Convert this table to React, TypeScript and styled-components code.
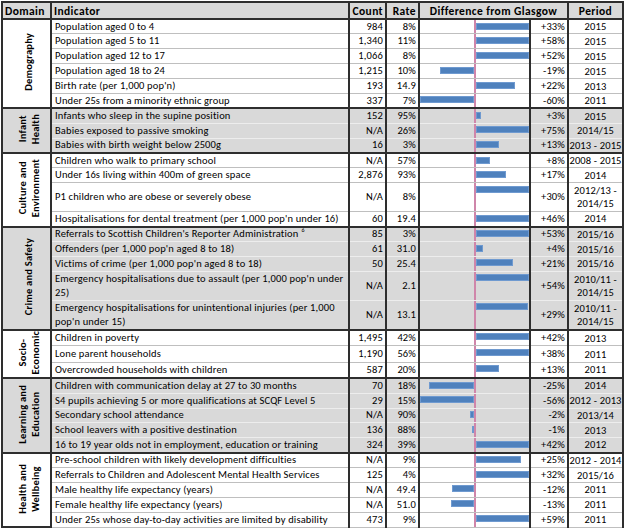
import React from 'react';
import styled, { createGlobalStyle } from 'styled-components';

const Global = createGlobalStyle`
  html, body { margin: 0; padding: 0; background: #ffffff; }
  body { font-family: Carlito, Lato, "Liberation Sans", sans-serif; color: #000; }
`;

type Row = {
  ind: React.ReactNode;
  count: string;
  rate: string;
  diff: number;
  period: React.ReactNode;
  tall?: boolean;
};
type Domain = { label: React.ReactNode; shade: boolean; rows: Row[] };

const GRAY = '#d9d9d9';
const DARK = '#2e2e2e';
const THIN = '#bfbfbf';
const THIN_ON_GRAY = '#ededed';
const PINK = '#cf86aa';

const Table = styled.table`
  border-collapse: collapse;
  table-layout: fixed;
  width: 621px;
  margin: 1px 0 0 1px;
  font-size: 10.5px;
  font-weight: 500;
  letter-spacing: 0.15px;
  line-height: 12px;
`;

const HeadRow = styled.tr`
  height: 17px;
  background: ${GRAY};
`;

const HeadCell = styled.th<{ $align?: string }>`
  border: 2px solid ${DARK};
  font-size: 11.5px;
  font-weight: 700;
  letter-spacing: 0.4px;
  text-align: ${(p) => p.$align || 'left'};
  padding: 0 2px 0 2px;
  white-space: nowrap;
  vertical-align: middle;
`;

const BodyRow = styled.tr<{ $shade: boolean; $tall?: boolean; $first: boolean }>`
  height: ${(p) => (p.$tall ? '29px' : '14.9px')};
  background: ${(p) => (p.$shade ? GRAY : '#ffffff')};
  & > td {
    border-top: ${(p) =>
      p.$first ? `2px solid ${DARK}` : `1px solid ${p.$shade ? THIN_ON_GRAY : THIN}`};
  }
`;

const DomainCell = styled.td<{ $shade: boolean }>`
  border: 2px solid ${DARK};
  background: ${(p) => (p.$shade ? GRAY : '#ffffff')};
  text-align: center;
  vertical-align: middle;
  padding: 0 0 0 6px;
`;

const DomainLabel = styled.div`
  display: inline-block;
  writing-mode: vertical-rl;
  transform: rotate(180deg);
  font-size: 10.5px;
  font-weight: 700;
  letter-spacing: 0.2px;
  white-space: nowrap;
  line-height: 12.5px;
  text-align: center;
`;

const Cell = styled.td<{ $shade?: boolean }>`
  border-left: 2px solid ${DARK};
  border-right: 2px solid ${DARK};
  border-bottom: 1px solid ${(p) => (p.$shade ? THIN_ON_GRAY : THIN)};
  vertical-align: middle;
  white-space: nowrap;
  overflow: hidden;
  padding: 0;
`;

const IndCell = styled(Cell)<{ $tall?: boolean }>`
  text-align: left;
  padding: 0 2px 0 3px;
  line-height: ${(p) => (p.$tall ? '14px' : '12px')};
`;

const NumCell = styled(Cell)`
  text-align: right;
  padding: 0 2px 0 0;
`;

const PeriodCell = styled(Cell)`
  text-align: center;
  line-height: 13px;
`;

const BarCell = styled(Cell)`
  vertical-align: top;
  background: linear-gradient(
      to right,
      transparent 54px,
      ${PINK} 54px,
      ${PINK} 55.5px,
      transparent 55.5px
    ),
    ${(p) => (p.$shade ? GRAY : '#ffffff')};
`;

const Track = styled.div`
  display: grid;
  grid-template-columns: 54px 56px;
  padding-top: 2.5px;
`;

const Side = styled.div<{ $neg?: boolean }>`
  display: flex;
  justify-content: ${(p) => (p.$neg ? 'flex-end' : 'flex-start')};
  padding: ${(p) => (p.$neg ? '0 0 0 0' : '0 0 0 1.5px')};
`;

const Bar = styled.div`
  height: 7px;
  background: #4f81bd;
  box-shadow: inset 0 0 0 1px #6f9ad0;
`;

const Sup = styled.sup`
  font-size: 6px;
  line-height: 0;
  vertical-align: 5px;
  margin-left: 3px;
`;

const twoLine = (a: string, b: string) => (
  <>
    {a}
    <br />
    {b}
  </>
);

const domains: Domain[] = [
  {
    label: 'Demography',
    shade: false,
    rows: [
      { ind: 'Population aged 0 to 4', count: '984', rate: '8%', diff: 33, period: '2015' },
      { ind: 'Population aged 5 to 11', count: '1,340', rate: '11%', diff: 58, period: '2015' },
      { ind: 'Population aged 12 to 17', count: '1,066', rate: '8%', diff: 52, period: '2015' },
      { ind: 'Population aged 18 to 24', count: '1,215', rate: '10%', diff: -19, period: '2015' },
      { ind: "Birth rate (per 1,000 pop'n)", count: '193', rate: '14.9', diff: 22, period: '2013' },
      { ind: 'Under 25s from a minority ethnic group', count: '337', rate: '7%', diff: -60, period: '2011' },
    ],
  },
  {
    label: twoLine('Infant', 'Health'),
    shade: true,
    rows: [
      { ind: 'Infants who sleep in the supine position', count: '152', rate: '95%', diff: 3, period: '2015' },
      { ind: 'Babies exposed to passive smoking', count: 'N/A', rate: '26%', diff: 75, period: '2014/15' },
      { ind: 'Babies with birth weight below 2500g', count: '16', rate: '3%', diff: 13, period: '2013 - 2015' },
    ],
  },
  {
    label: twoLine('Culture and', 'Environment'),
    shade: false,
    rows: [
      { ind: 'Children who walk to primary school', count: 'N/A', rate: '57%', diff: 8, period: '2008 - 2015' },
      { ind: 'Under 16s living within 400m of green space', count: '2,876', rate: '93%', diff: 17, period: '2014' },
      {
        ind: 'P1 children who are obese or severely obese',
        count: 'N/A',
        rate: '8%',
        diff: 30,
        period: twoLine('2012/13 -', '2014/15'),
        tall: true,
      },
      {
        ind: "Hospitalisations for dental treatment (per 1,000 pop'n under 16)",
        count: '60',
        rate: '19.4',
        diff: 46,
        period: '2014',
      },
    ],
  },
  {
    label: 'Crime and Safety',
    shade: true,
    rows: [
      {
        ind: (
          <>
            Referrals to Scottish Children's Reporter Administration<Sup>6</Sup>
          </>
        ),
        count: '85',
        rate: '3%',
        diff: 53,
        period: '2015/16',
      },
      { ind: "Offenders (per 1,000 pop'n aged 8 to 18)", count: '61', rate: '31.0', diff: 4, period: '2015/16' },
      { ind: "Victims of crime (per 1,000 pop'n aged 8 to 18)", count: '50', rate: '25.4', diff: 21, period: '2015/16' },
      {
        ind: twoLine("Emergency hospitalisations due to assault (per 1,000 pop'n under", '25)'),
        count: 'N/A',
        rate: '2.1',
        diff: 54,
        period: twoLine('2010/11 -', '2014/15'),
        tall: true,
      },
      {
        ind: twoLine('Emergency hospitalisations for unintentional injuries (per 1,000', "pop'n under 15)"),
        count: 'N/A',
        rate: '13.1',
        diff: 29,
        period: twoLine('2010/11 -', '2014/15'),
        tall: true,
      },
    ],
  },
  {
    label: twoLine('Socio-', 'Economic'),
    shade: false,
    rows: [
      { ind: 'Children in poverty', count: '1,495', rate: '42%', diff: 42, period: '2013' },
      { ind: 'Lone parent households', count: '1,190', rate: '56%', diff: 38, period: '2011' },
      { ind: 'Overcrowded households with children', count: '587', rate: '20%', diff: 13, period: '2011' },
    ],
  },
  {
    label: twoLine('Learning and', 'Education'),
    shade: true,
    rows: [
      { ind: 'Children with communication delay at 27 to 30 months', count: '70', rate: '18%', diff: -25, period: '2014' },
      {
        ind: 'S4 pupils achieving 5 or more qualifications at SCQF Level 5',
        count: '29',
        rate: '15%',
        diff: -56,
        period: '2012 - 2013',
      },
      { ind: 'Secondary school attendance', count: 'N/A', rate: '90%', diff: -2, period: '2013/14' },
      { ind: 'School leavers with a positive destination', count: '136', rate: '88%', diff: -1, period: '2013' },
      {
        ind: '16 to 19 year olds not in employment, education or training',
        count: '324',
        rate: '39%',
        diff: 42,
        period: '2012',
      },
    ],
  },
  {
    label: twoLine('Health and', 'Wellbeing'),
    shade: false,
    rows: [
      {
        ind: 'Pre-school children with likely development difficulties',
        count: 'N/A',
        rate: '9%',
        diff: 25,
        period: '2012 - 2014',
      },
      {
        ind: 'Referrals to Children and Adolescent Mental Health Services',
        count: '125',
        rate: '4%',
        diff: 32,
        period: '2015/16',
      },
      { ind: 'Male healthy life expectancy (years)', count: 'N/A', rate: '49.4', diff: -12, period: '2011' },
      { ind: 'Female healthy life expectancy (years)', count: 'N/A', rate: '51.0', diff: -13, period: '2011' },
      {
        ind: 'Under 25s whose day-to-day activities are limited by disability',
        count: '473',
        rate: '9%',
        diff: 59,
        period: '2011',
      },
    ],
  },
];

const SCALE = 1.8;

function DiffBar({ diff }: { diff: number }) {
  const neg = diff < 0;
  const w = Math.min(Math.abs(diff) * SCALE, neg ? 54 : 53);
  return (
    <Track>
      <Side $neg>{neg && <Bar style={{ width: `${w}px` }} />}</Side>
      <Side>{!neg && <Bar style={{ width: `${w}px` }} />}</Side>
    </Track>
  );
}

const fmt = (d: number) => (d > 0 ? `+${d}%` : `${d}%`);

export default function App() {
  return (
    <>
      <Global />
      <Table>
        <colgroup>
          <col style={{ width: 49 }} />
          <col style={{ width: 298 }} />
          <col style={{ width: 37 }} />
          <col style={{ width: 33 }} />
          <col style={{ width: 111 }} />
          <col style={{ width: 38 }} />
          <col style={{ width: 55 }} />
        </colgroup>
        <thead>
          <HeadRow>
            <HeadCell>Domain</HeadCell>
            <HeadCell>Indicator</HeadCell>
            <HeadCell $align="right">Count</HeadCell>
            <HeadCell $align="right">Rate</HeadCell>
            <HeadCell $align="center" colSpan={2}>
              Difference from Glasgow
            </HeadCell>
            <HeadCell $align="center">Period</HeadCell>
          </HeadRow>
        </thead>
        <tbody>
          {domains.map((dom, di) =>
            dom.rows.map((r, ri) => (
              <BodyRow key={`${di}-${ri}`} $shade={dom.shade} $tall={r.tall} $first={ri === 0}>
                {ri === 0 && (
                  <DomainCell rowSpan={dom.rows.length} $shade={dom.shade}>
                    <DomainLabel>{dom.label}</DomainLabel>
                  </DomainCell>
                )}
                <IndCell $tall={r.tall} $shade={dom.shade}>
                  {r.ind}
                </IndCell>
                <NumCell $shade={dom.shade}>{r.count}</NumCell>
                <NumCell $shade={dom.shade}>{r.rate}</NumCell>
                <BarCell $shade={dom.shade}>
                  <DiffBar diff={r.diff} />
                </BarCell>
                <NumCell $shade={dom.shade}>{fmt(r.diff)}</NumCell>
                <PeriodCell $shade={dom.shade}>{r.period}</PeriodCell>
              </BodyRow>
            ))
          )}
        </tbody>
      </Table>
    </>
  );
}
